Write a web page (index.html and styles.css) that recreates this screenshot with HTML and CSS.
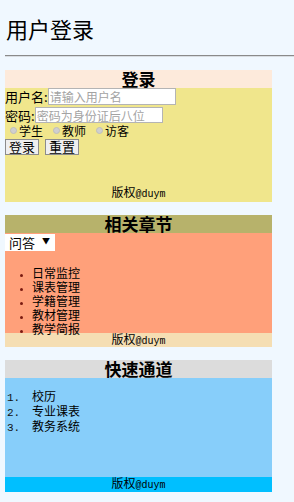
FILE: index.html
```html
<!DOCTYPE html>
<html lang="zh-CN">
<head>
<meta charset="utf-8">
<title>用户登录</title>
<link rel="stylesheet" href="styles.css">
</head>
<body>
<h2 class="page-title">用户登录</h2>
<hr class="rule">

<section class="box box-login">
  <h3 class="box-head">登录</h3>
  <div class="box-body">
    <div class="row row-user"><label>用户名:</label><input class="field field-user" type="text" placeholder="请输入用户名"></div>
    <div class="row row-pass"><label>密码:</label><input class="field field-pass" type="password" placeholder="密码为身份证后八位"></div>
    <div class="row row-radio">
      <label class="opt"><input class="radio" type="radio" name="role">学生</label>
      <label class="opt"><input class="radio" type="radio" name="role">教师</label>
      <label class="opt"><input class="radio" type="radio" name="role">访客</label>
    </div>
    <div class="row row-btn"><button class="btn">登录</button><button class="btn">重置</button></div>
  </div>
  <div class="box-foot">版权<span class="latin">@duym</span></div>
</section>

<section class="box box-chapter">
  <h3 class="box-head">相关章节</h3>
  <div class="box-body">
    <span class="select-wrap"><select class="select"><option>问答</option></select></span>
    <ul class="bullets">
      <li>日常监控</li>
      <li>课表管理</li>
      <li>学籍管理</li>
      <li>教材管理</li>
      <li>教学简报</li>
    </ul>
  </div>
  <div class="box-foot">版权<span class="latin">@duym</span></div>
</section>

<section class="box box-quick">
  <h3 class="box-head">快速通道</h3>
  <div class="box-body">
    <ol class="numbers">
      <li>校历</li>
      <li>专业课表</li>
      <li>教务系统</li>
    </ol>
  </div>
  <div class="box-foot">版权<span class="latin">@duym</span></div>
</section>
</body>
</html>
```

FILE: styles.css
```css
html { background: #f0f8ff; }
body {
  margin: 0;
  padding: 0 0 10px 5px;
  background: #f0f8ff;
  font-family: "Noto Sans CJK SC", "Noto Sans", sans-serif;
  font-size: 13px;
  color: #000;
}
.page-title {
  margin: 15px 0 0 1px;
  font-size: 22px;
  line-height: 26px;
  font-weight: normal;
}
.rule {
  margin: 14px 0 13px 0;
  border: 0;
  border-top: 1px solid #8a8a8a;
  border-bottom: 1px solid #d8dde2;
  height: 0;
}
.box {
  width: 267px;
  margin-bottom: 13px;
}
.box-head {
  margin: 0;
  height: 18px;
  line-height: 18px;
  font-size: 17px;
  font-weight: bold;
  text-align: center;
}
.box-foot {
  text-align: center;
  font-family: "Liberation Sans", "Noto Sans CJK SC", sans-serif;
  font-size: 12px;
  line-height: 15px;
  height: 15px;
}
.latin { font-family: "Liberation Mono", monospace; font-size: 10px; }

/* login */
.box-login .box-head { background: #fdeadb; }
.box-login .box-body { background: #f0e68c; height: 97px; }
.box-login .box-foot { background: #f0e68c; height: 17px; line-height: 17px; }
.row { display: flex; align-items: center; }
.row-user { height: 17px; }
.row-pass { height: 16px; margin-top: 2px; }
.row-radio { height: 15px; }
.row-btn { height: 16px; margin-top: 1px; gap: 6px; }
.row label { white-space: nowrap; }
.field {
  box-sizing: border-box;
  width: 128px;
  height: 17px;
  margin: 0;
  padding: 0 1px;
  border: 1px solid #b4b4b4;
  background: #fff;
  font-family: "Noto Sans CJK SC", sans-serif;
  font-size: 12px;
}
.field-pass { height: 16px; }
.field::placeholder { color: #a3a3a3; }
.opt { display: flex; align-items: center; font-size: 12px; margin-right: 10px; }
.opt:first-child { margin-left: 5px; }
.radio {
  appearance: none;
  width: 7px;
  height: 7px;
  margin: 0 2px 0 0;
  border-radius: 50%;
  background: #cfcfcf;
  border: 1px solid #bdbdbd;
  box-sizing: border-box;
}
.btn {
  box-sizing: border-box;
  height: 16px;
  width: 34px;
  padding: 0;
  margin: 0;
  border: 1px solid #8c8c8c;
  background: #efefef;
  font-family: "Noto Sans CJK SC", sans-serif;
  font-size: 13px;
  line-height: 14px;
}

/* chapter */
.box-chapter .box-head { background: #b7b26b; }
.box-chapter .box-body { background: #ffa07a; height: 100px; }
.box-chapter .box-foot { background: #f5deb3; height: 14px; line-height: 14px; }
.select-wrap { position: relative; display: inline-block; }
.select {
  appearance: none;
  box-sizing: border-box;
  width: 50px;
  height: 17px;
  margin: 0;
  padding: 0 0 0 4px;
  border: 0;
  background: #fff;
  font-family: "Noto Sans CJK SC", sans-serif;
  font-size: 13px;
  line-height: 17px;
  color: #000;
}
.select-wrap::after {
  content: "▼";
  position: absolute;
  right: 5px;
  top: 2px;
  font-size: 8px;
  line-height: 12px;
}
.bullets {
  margin: 15px 0 0 0;
  padding-left: 27px;
  font-family: "Liberation Sans", "Noto Sans CJK SC", sans-serif;
  font-size: 12px;
  line-height: 14px;
}
.bullets li::marker { color: #7a1a10; font-size: 9px; }

/* quick */
.box-quick .box-head { background: #dcdcdc; }
.box-quick .box-body { background: #87cefa; height: 99px; overflow: hidden; }
.box-quick .box-foot { background: #00bfff; }
.numbers {
  margin: 0;
  padding: 12px 0 0 27px;
  list-style: none;
  counter-reset: n;
  font-family: "Liberation Sans", "Noto Sans CJK SC", sans-serif;
  font-size: 12px;
  line-height: 14px;
}
.numbers li { counter-increment: n; }
.numbers li::before {
  content: counter(n) ".";
  display: inline-block;
  width: 25px;
  margin-left: -25px;
  font-family: "Liberation Mono", monospace;
  font-size: 11px;
  color: #111;
}
```
